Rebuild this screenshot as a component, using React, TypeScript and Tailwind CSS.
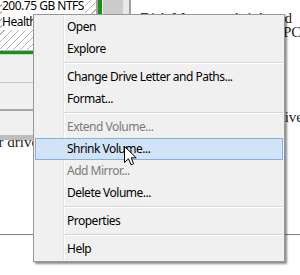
import React from "react";

type Item = { label?: string; disabled?: boolean; active?: boolean; sep?: boolean };

const menuItems: Item[] = [
  { label: "Open" },
  { label: "Explore" },
  { sep: true },
  { label: "Change Drive Letter and Paths..." },
  { label: "Format..." },
  { sep: true },
  { label: "Extend Volume...", disabled: true },
  { label: "Shrink Volume...", active: true },
  { label: "Add Mirror...", disabled: true },
  { label: "Delete Volume..." },
  { sep: true },
  { label: "Properties" },
  { sep: true },
  { label: "Help" },
];

function DiskPanel() {
  return (
    <div className="flex h-[141px] w-[131px] shrink-0">
      <div className="flex w-[96px] flex-col">
        {/* volume block, hatched */}
        <div className="h-[51px] overflow-hidden border-b border-[#b8b8b8] bg-[repeating-linear-gradient(135deg,#ffffff_0px,#ffffff_4px,#b4b4b4_4px,#b4b4b4_5px)] pl-[2px] text-[12px] leading-[16px] tracking-[-0.5px] text-black">
          <div className="-mt-[2px] flex flex-col items-start whitespace-nowrap">
            <span className="bg-white pr-[1px]">200.75 GB NTFS</span>
            <span className="bg-white pr-[1px]">Healthy (Primary Partition)</span>
          </div>
        </div>
        <div className="h-[3px] bg-[#139313]" />
        <div className="h-[28px] border-t border-[#d4d4d4] bg-[#f0f0f0]" />
        <div className="h-[27px] border-t border-[#c8c8c8] bg-[#f0f0f0]" />
        <div className="h-[26px] border-t-2 border-[#a6a6a6] bg-[#f0f0f0]" />
        <div className="h-[5px] bg-[#bdbdbd]" />
      </div>
      <div className="w-[2px] bg-[#a0a0a0]" />
      <div className="w-[4px] bg-[#139313]" />
      <div className="w-[1px] bg-white" />
      <div className="w-[20px] bg-[#cbcbcb]" />
      <div className="w-[6px] bg-[#e8e8e8]" />
      <div className="w-[2px] bg-[#a0a0a0]" />
    </div>
  );
}

function ContextMenu() {
  return (
    <div className="absolute left-[33px] top-[14px] z-20 w-[252px] border border-[#979797] bg-[#f0f0f0] py-[1px] font-['Noto_Sans',sans-serif] text-[12px] tracking-[-0.5px] shadow-[2px_2px_2px_rgba(0,0,0,0.45)]">
      {/* icon gutter */}
      <div className="absolute bottom-0 left-[29px] top-0 w-[2px] border-l border-[#e2e3e3] bg-white" />
      {menuItems.map((it, i) =>
        it.sep ? (
          <div key={i} className="relative h-[6px] pt-[2px]">
            <div className="ml-[29px] mr-[1px] h-px bg-[#d7d7d7]" />
            <div className="ml-[29px] mr-[1px] h-px bg-white" />
          </div>
        ) : (
          <div
            key={i}
            className={`relative mx-[1px] flex h-[22px] items-center border pl-[31px] ${
              it.active ? "border-[#84b0e2] bg-[#d1e3f6]" : "border-transparent"
            } ${it.disabled ? "text-[#7a7a7a]" : "text-black"}`}
          >
            {it.label}
          </div>
        )
      )}
    </div>
  );
}

function Cursor() {
  return (
    <svg className="absolute left-[124px] top-[146px] z-30" width="13" height="20" viewBox="0 0 13 20">
      <path
        d="M0.5 0.5 L0.5 16.5 L4.5 12.8 L7 18.8 L9.6 17.7 L7.2 11.8 L12.2 11.8 Z"
        fill="#ffffff"
        stroke="#000000"
        strokeWidth="1"
        strokeLinejoin="miter"
      />
    </svg>
  );
}

export default function App() {
  return (
    <div className="relative h-[275px] w-[300px] overflow-hidden bg-white font-['Noto_Sans',sans-serif]">
      <div className="flex">
        <div className="relative z-10">
          <DiskPanel />
        </div>
        <div className="h-[141px] flex-1 overflow-hidden pt-[10px] font-['Liberation_Serif',serif] text-[15px] leading-[17px] text-[#1c1c1c]">
          <div className="flex justify-end whitespace-nowrap">
            <span className="mr-[8px]">lets Disk Manager shrink and</span>
          </div>
          <div className="-mt-[3px] flex justify-end whitespace-nowrap">
            <span className="-mr-[5px]">space on your PC.</span>
          </div>
          <div className="h-[68px]" />
          <div className="flex justify-end whitespace-nowrap">
            <span className="-mr-[3px]">room on the drive</span>
          </div>
        </div>
      </div>
      <div className="-mt-[7px] font-['Liberation_Serif',serif] text-[15px] leading-[17px] text-[#1c1c1c]">
        <div className="flex whitespace-nowrap">
          <span className="-ml-[24px]">your drive and</span>
        </div>
        <div className="mt-[83px] h-px bg-[#808080]" />
      </div>
      <ContextMenu />
      <Cursor />
    </div>
  );
}
